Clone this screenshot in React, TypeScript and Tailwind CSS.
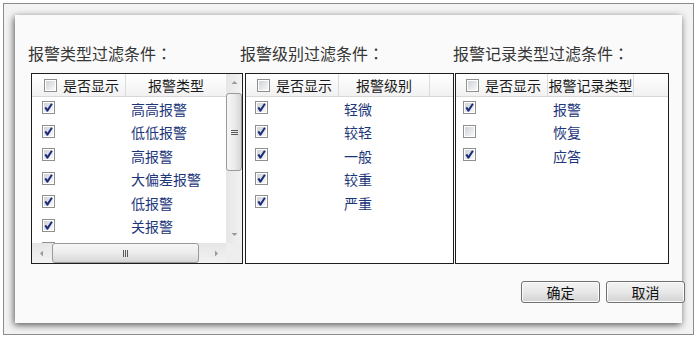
import React from "react";

type Row = { c: boolean; t: string };

function Check({ checked }: { checked: boolean }) {
  return (
    <span className="relative flex h-[13px] w-[13px] shrink-0 items-center justify-center border border-[#8e8f8f] bg-white">
      <span className="absolute inset-[1px] bg-linear-to-br from-[#cfd2d7] to-[#f8f8f8]" />
      {checked && (
        <svg className="relative" width="11" height="11" viewBox="0 0 11 11">
          <path d="M2.3 5.4 L4.4 8.6 L8.9 1.8" fill="none" stroke="#1d2b7a" strokeWidth="2" strokeLinejoin="round" />
        </svg>
      )}
    </span>
  );
}

function Arrow({ dir }: { dir: "up" | "down" | "left" | "right" }) {
  const d =
    dir === "up"
      ? "M0.5 4 L3.5 1 L6.5 4 Z"
      : dir === "down"
      ? "M0.5 1 L3.5 4 L6.5 1 Z"
      : dir === "left"
      ? "M4 0.5 L1 3.5 L4 6.5 Z"
      : "M1 0.5 L4 3.5 L1 6.5 Z";
  const w = dir === "up" || dir === "down" ? 7 : 5;
  const h = dir === "up" || dir === "down" ? 5 : 7;
  return (
    <svg width={w} height={h} viewBox={`0 0 ${w} ${h}`}>
      <path d={d} fill="#9a9a9a" />
    </svg>
  );
}

function VScroll() {
  return (
    <div className="flex flex-1 flex-col bg-linear-to-r from-[#e6e6e6] to-[#f2f2f2]">
      <div className="flex h-[17px] shrink-0 items-center justify-center">
        <Arrow dir="up" />
      </div>
      <div className="mt-[2px] flex h-[78px] shrink-0 flex-col items-center justify-center gap-[1px] rounded-[3px] border border-[#9a9a9a] bg-linear-to-r from-[#f6f6f6] via-[#ececec] to-[#d6d6d6]">
        <span className="h-[1px] w-[7px] bg-[#5a5a5a]" />
        <span className="h-[1px] w-[7px] bg-[#5a5a5a]" />
        <span className="h-[1px] w-[7px] bg-[#5a5a5a]" />
      </div>
      <div className="flex-1" />
      <div className="flex h-[17px] shrink-0 items-center justify-center">
        <Arrow dir="down" />
      </div>
    </div>
  );
}

function HScroll() {
  return (
    <div className="flex h-[20px] shrink-0 bg-linear-to-b from-[#e6e6e6] to-[#f2f2f2]">
      <div className="flex w-[19px] shrink-0 items-center justify-center">
        <Arrow dir="left" />
      </div>
      <div className="ml-[1px] flex w-[147px] shrink-0 items-center justify-center gap-[1px] rounded-[3px] border border-[#9a9a9a] bg-linear-to-b from-[#f6f6f6] via-[#ececec] to-[#d6d6d6]">
        <span className="h-[7px] w-[1px] bg-[#5a5a5a]" />
        <span className="h-[7px] w-[1px] bg-[#5a5a5a]" />
        <span className="h-[7px] w-[1px] bg-[#5a5a5a]" />
      </div>
      <div className="flex-1" />
      <div className="flex w-[19px] shrink-0 items-center justify-center">
        <Arrow dir="right" />
      </div>
    </div>
  );
}

function Header({
  c1,
  c2,
  head,
  hcb,
  lastBorder,
}: {
  c1: string;
  c2: string;
  head: string;
  hcb: string;
  lastBorder: boolean;
}) {
  return (
    <div className="flex h-[23px] shrink-0 border-b border-[#d8d8d8] bg-linear-to-b from-white to-[#f1f1f1] text-[14px] leading-[22px] text-[#1a1a1a]">
      <div className={`flex shrink-0 items-center border-r border-[#dcdcdc] ${c1}`}>
        <span className={hcb}>
          <Check checked={false} />
        </span>
        <span className="ml-[6px] whitespace-nowrap">是否显示</span>
      </div>
      <div
        className={`flex shrink-0 items-center justify-center whitespace-nowrap ${c2} ${
          lastBorder ? "border-r border-[#dcdcdc]" : ""
        }`}
      >
        {head}
      </div>
      <div className="flex-1" />
    </div>
  );
}

function Rows({ rows, c1, c2, rcb }: { rows: Row[]; c1: string; c2: string; rcb: string }) {
  return (
    <div className="flex flex-1 flex-col overflow-hidden">
      {rows.map((r, i) => (
        <div key={i} className="flex h-[23.5px] shrink-0 items-start">
          <div className={`flex shrink-0 pt-[4px] ${c1} ${rcb}`}>
            <Check checked={r.c} />
          </div>
          <div className={`shrink-0 whitespace-nowrap pl-[5px] pt-[3.5px] text-[14px] leading-[17px] text-[#1c367a] ${c2}`}>
            {r.t}
          </div>
        </div>
      ))}
    </div>
  );
}

function Title({ text, off }: { text: string; off: string }) {
  return (
    <div className={`mb-[10px] h-[20px] whitespace-nowrap text-[16px] leading-[20px] text-[#363636] ${off}`}>
      {text}
      <span className="font-[family-name:'Noto_Sans_CJK_JP',sans-serif]">：</span>
    </div>
  );
}

export default function App() {
  const rows1: Row[] = [
    { c: true, t: "高高报警" },
    { c: true, t: "低低报警" },
    { c: true, t: "高报警" },
    { c: true, t: "大偏差报警" },
    { c: true, t: "低报警" },
    { c: true, t: "关报警" },
    { c: false, t: "" },
  ];
  const rows2: Row[] = [
    { c: true, t: "轻微" },
    { c: true, t: "较轻" },
    { c: true, t: "一般" },
    { c: true, t: "较重" },
    { c: true, t: "严重" },
  ];
  const rows3: Row[] = [
    { c: true, t: "报警" },
    { c: false, t: "恢复" },
    { c: true, t: "应答" },
  ];

  return (
    <div className="h-[339px] w-[700px] bg-white p-[3px] font-[family-name:'Noto_Sans_CJK_SC',sans-serif]">
      <div className="h-[332px] w-[691px] border border-[#8c8c8c] bg-[#f3f3f3] p-[11px]">
        <div className="flex h-[308px] w-[667px] flex-col bg-[#fafafa] pl-[16px] pt-[28px] shadow-[-1px_2px_7px_rgba(0,0,0,0.65)]">
          <div className="flex">
            {/* Grid 1 */}
            <div className="flex w-[212px] flex-col">
              <Title text="报警类型过滤条件" off="-ml-[3px]" />
              <div className="flex h-[191px] border border-[#1e1e1e] bg-white">
                <div className="flex min-w-0 flex-1 flex-col">
                  <Header c1="w-[94px]" c2="w-[100px]" head="报警类型" hcb="ml-[12px]" lastBorder={false} />
                  <Rows rows={rows1} c1="w-[94px]" c2="w-[100px]" rcb="pl-[10px]" />
                  <HScroll />
                </div>
                <div className="flex w-[16px] flex-col">
                  <VScroll />
                  <div className="h-[20px] shrink-0 bg-[#eeeeee]" />
                </div>
              </div>
            </div>
            {/* Grid 2 */}
            <div className="ml-[2px] flex w-[209px] flex-col">
              <Title text="报警级别过滤条件" off="-ml-[5px]" />
              <div className="flex h-[191px] flex-col border border-[#1e1e1e] bg-white">
                <Header c1="w-[93px]" c2="w-[91px]" head="报警级别" hcb="ml-[11px]" lastBorder={true} />
                <Rows rows={rows2} c1="w-[93px]" c2="w-[91px]" rcb="pl-[9px]" />
              </div>
            </div>
            {/* Grid 3 */}
            <div className="ml-[1px] flex w-[214px] flex-col">
              <Title text="报警记录类型过滤条件" off="-ml-[2px]" />
              <div className="flex h-[191px] flex-col border border-[#1e1e1e] bg-white">
                <Header c1="w-[92px]" c2="w-[86px]" head="报警记录类型" hcb="ml-[10px]" lastBorder={true} />
                <Rows rows={rows3} c1="w-[92px]" c2="w-[86px]" rcb="pl-[7px]" />
              </div>
            </div>
          </div>
          <div className="mt-[17px] flex w-[654px] justify-end gap-[6px]">
            <button className="flex h-[22px] w-[79px] items-center justify-center rounded-[3px] border border-[#707070] bg-linear-to-b from-[#f3f3f3] via-[#e8e8e8] to-[#d2d2d2] text-[14px] leading-[20px] text-[#111] shadow-[inset_0_0_0_1px_#fbfbfb]">
              确定
            </button>
            <button className="flex h-[22px] w-[79px] items-center justify-center rounded-[3px] border border-[#707070] bg-linear-to-b from-[#f3f3f3] via-[#e8e8e8] to-[#d2d2d2] text-[14px] leading-[20px] text-[#111] shadow-[inset_0_0_0_1px_#fbfbfb]">
              取消
            </button>
          </div>
        </div>
      </div>
    </div>
  );
}
